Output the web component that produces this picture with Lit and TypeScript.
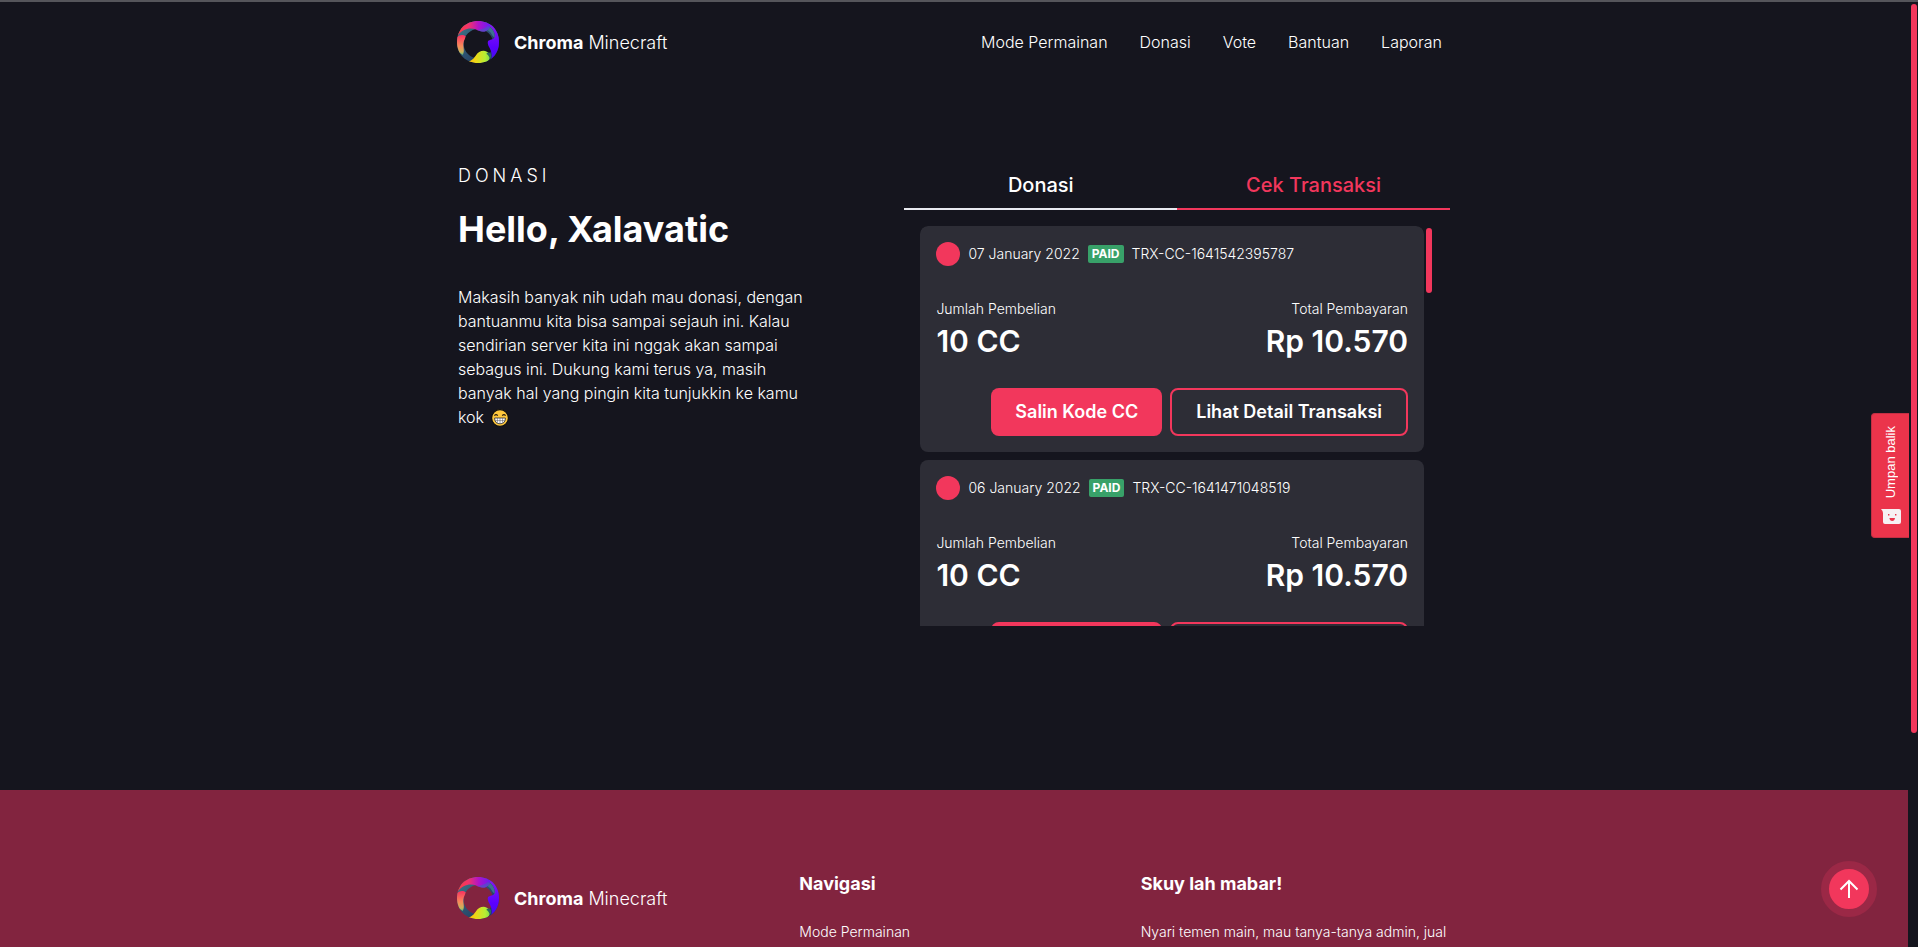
import { LitElement, html, css, svg } from "lit";
import { customElement, property, state } from "lit/decorators.js";

interface Transaction {
  id: string;
  date: string;
  amount: string;
  total: string;
}

const TRANSACTIONS: Transaction[] = [
  { id: "TRX-CC-1641542395787", date: "07 January 2022", amount: "10 CC", total: "Rp 10.570" },
  { id: "TRX-CC-1641471048519", date: "06 January 2022", amount: "10 CC", total: "Rp 10.570" },
];

const NAV = ["Mode Permainan", "Donasi", "Vote", "Bantuan", "Laporan"];

@customElement("chroma-brand")
class ChromaBrand extends LitElement {
  static styles = css`
    :host { display: block; }
    .brand {
      display: flex;
      align-items: center;
      gap: 15px;
      margin-left: -1px;
      color: #fff;
      text-decoration: none;
      font-size: 18px;
      line-height: 27px;
      font-weight: 300;
    }
    .mark { width: 42px; height: 42px; flex: none; }
    b { font-weight: 700; }
  `;
  render() {
    return html`<a class="brand" href="#">
      <svg class="mark" viewBox="0 0 126 126" aria-hidden="true">
        ${svg`
        <defs>
          <clipPath id="edge"><path d="M63 0C100 0 126 26 126 63C126 100 100 126 63 126C26 126 0 100 0 63C0 26 26 0 63 0Z"/></clipPath>
          <linearGradient id="top"><stop offset="0" stop-color="#ff3c3c"/><stop offset=".35" stop-color="#f2336b"/><stop offset=".65" stop-color="#b014c8"/><stop offset="1" stop-color="#6a1cf5"/></linearGradient>
          <linearGradient id="right" x1="0" y1="0" x2="0" y2="1"><stop offset="0" stop-color="#8a1cf0"/><stop offset=".6" stop-color="#5c00ff"/><stop offset="1" stop-color="#3a10f0"/></linearGradient>
          <linearGradient id="left" x1="0" y1="0" x2="0" y2="1"><stop offset="0" stop-color="#f9305f"/><stop offset=".55" stop-color="#f98a5a"/><stop offset=".85" stop-color="#c9b45a"/><stop offset="1" stop-color="#4fae7a"/></linearGradient>
          <linearGradient id="bottom"><stop offset="0" stop-color="#ffae00"/><stop offset=".4" stop-color="#f2d414"/><stop offset=".8" stop-color="#b6ee34"/><stop offset="1" stop-color="#7fdc4c"/></linearGradient>
          <linearGradient id="teal" x1="0" y1="0" x2="1" y2="1"><stop offset="0" stop-color="#3f7d8c"/><stop offset=".5" stop-color="#2b5070"/><stop offset="1" stop-color="#1a2b52"/></linearGradient>
        </defs>
        <g clip-path="url(#edge)">
          <path fill="url(#teal)" fill-rule="evenodd" d="M0 0H126V126H0ZM64 24A44 44 0 1 0 64 112A44 44 0 1 0 64 24Z"/>
          <path fill="url(#right)" d="M96 6H126V126H102C104 110 106 100 101 88C97 78 90 70 93 61C98 54 110 58 113 48C115 34 106 22 96 14Z"/>
          <path fill="#3d7390" d="M94 14C106 22 115 34 113 50C108 48 104 40 100 34C96 30 92 28 90 26Z"/>
          <path fill="url(#left)" d="M0 48C8 40 20 40 26 46C25 54 20 58 19 68C18 80 24 88 17 102L0 90Z"/>
          <path fill="url(#top)" d="M0 0H96C101 8 101 18 94 25C84 36 68 32 56 25C40 19 16 22 2 44Z"/>
          <path fill="#4f54c4" opacity=".7" d="M60 26C76 26 84 20 96 14C98 24 88 34 76 32C70 31 66 29 60 26Z"/>
          <path fill="url(#bottom)" d="M22 126C38 122 48 116 56 104C62 94 70 89 80 89C92 90 98 98 100 108C98 116 92 122 84 126Z"/>
          <path fill="#2c6a5c" d="M88 98C94 93 100 94 102 100C103 106 102 112 98 114C97 106 94 102 88 98Z"/>
        </g>`}
      </svg>
      <span><b>Chroma</b> Minecraft</span>
    </a>`;
  }
}

@customElement("transaction-card")
class TransactionCard extends LitElement {
  @property({ attribute: false }) item!: Transaction;
  static styles = css`
    :host { display: block; }
    .card {
      padding: 16px;
      border-radius: 8px;
      background: #2d2d36;
      display: flex;
      flex-direction: column;
    }
    .head { display: flex; align-items: center; gap: 8px; font-size: 14px; line-height: 24px; font-weight: 300; }
    .dot { width: 24px; height: 24px; border-radius: 50%; background: #f2375c; flex: none; }
    .badge {
      padding: 0 4px;
      border-radius: 2px;
      background: #38a169;
      font-size: 12px;
      line-height: 18px;
      font-weight: 700;
    }
    .stats { display: flex; justify-content: space-between; margin: 32px 0 24px; }
    .stat:last-child { text-align: right; }
    dl, dd, dt { margin: 0; }
    dt { font-size: 14px; line-height: 21px; font-weight: 300; }
    dd { font-size: 30px; line-height: 45px; font-weight: 600; }
    .actions { display: flex; justify-content: flex-end; gap: 8px; }
    button {
      height: 48px;
      padding: 0 24px;
      border: 0;
      border-radius: 8px;
      background: #f2375c;
      color: #fff;
      font: 600 18px/24px Inter, sans-serif;
      cursor: pointer;
    }
    .outline { border: 2px solid #f2375c; background: transparent; }
  `;
  render() {
    const t = this.item;
    return html`<article class="card">
      <div class="head">
        <span class="dot"></span><span>${t.date}</span><span class="badge">PAID</span><span>${t.id}</span>
      </div>
      <dl class="stats">
        <div class="stat"><dt>Jumlah Pembelian</dt><dd>${t.amount}</dd></div>
        <div class="stat"><dt>Total Pembayaran</dt><dd>${t.total}</dd></div>
      </dl>
      <div class="actions">
        <button type="button">Salin Kode CC</button>
        <button type="button" class="outline">Lihat Detail Transaksi</button>
      </div>
    </article>`;
  }
}

@customElement("app-root")
class AppRoot extends LitElement {
  @state() private tab = 1;

  static styles = css`
    :host {
      display: flex;
      height: 100vh;
      box-sizing: border-box;
      border-top: 2px solid #55555b;
      background: #15151e;
      color: #fff;
      font-family: Inter, sans-serif;
      font-size: 16px;
      line-height: 24px;
      overflow: hidden;
    }
    a { color: inherit; text-decoration: none; }
    .page { flex: 1; min-width: 0; overflow-y: auto; scrollbar-width: none; }
    .rail { width: 10px; flex: none; padding: 2px 1px 2px 3px; box-sizing: border-box; }
    .rail-thumb { height: 77.5%; border-radius: 3px; background: #f2375c; }
    .container { max-width: 992px; margin: 0 auto; padding: 0 16px; }
    .header { display: flex; align-items: center; justify-content: space-between; height: 80px; }
    .nav { display: flex; gap: 16px; font-weight: 300; }
    .nav a { padding: 0 8px; }
    .hero { display: grid; grid-template-columns: 45fr 55fr; padding-top: 76px; padding-bottom: 164px; }
    .intro { max-width: 352px; font-weight: 300; }
    .eyebrow { margin: 4px 0 0; font-size: 18px; line-height: 27px; letter-spacing: 4px; }
    h1 { margin: 13px 0 29px; font-size: 36px; line-height: 54px; font-weight: 700; }
    .copy { margin: 0; }
    .emoji { width: 18px; height: 18px; vertical-align: -4px; margin-left: 2px; }
    .tabs { display: flex; }
    .tab {
      flex: 1;
      padding: 13px 16px 9px;
      border: 0;
      border-bottom: 2px solid #e8eaf0;
      background: none;
      color: #fff;
      font: 500 20px/28px Inter, sans-serif;
      cursor: pointer;
    }
    .tab[aria-selected="true"] { color: #f2375c; border-color: #f2375c; }
    .panel { display: flex; margin: 16px 16px 0; height: 400px; }
    .list { flex: 1; overflow-y: auto; scrollbar-width: none; display: flex; flex-direction: column; gap: 8px; border-radius: 8px 8px 0 0; }
    .list-rail { width: 10px; flex: none; padding: 2px; box-sizing: border-box; }
    .list-thumb { height: 65px; border-radius: 3px; background: #f2375c; }
    .footer { background: #82243f; padding: 80px 0 64px; font-weight: 300; font-size: 14px; line-height: 21px; }
    .cols { display: grid; grid-template-columns: repeat(3, 1fr); gap: 32px; }
    .logo-cell { padding-top: 7px; }
    h2 { margin: 0; font-size: 18px; line-height: 27px; font-weight: 700; }
    .links { list-style: none; margin: 24px 0 0; padding: 0; display: grid; gap: 8px; }
    .join { margin: 24px 0 0; }
    .feedback {
      position: absolute;
      right: 9px;
      top: 413px;
      width: 38px;
      height: 125px;
      padding: 12px 0;
      border: 1px solid #c22f43;
      border-right: 0;
      border-radius: 4px 0 0 4px;
      background: #eb344b;
      color: #fff;
      display: flex;
      flex-direction: column;
      align-items: center;
      justify-content: space-between;
      font: 13px/16px "Liberation Sans", sans-serif;
      cursor: pointer;
      box-sizing: border-box;
    }
    .feedback-text { writing-mode: vertical-rl; transform: rotate(180deg); }
    .feedback svg { width: 20px; height: 16px; }
    .to-top {
      position: absolute;
      right: 41px;
      bottom: 30px;
      width: 56px;
      height: 56px;
      padding: 0;
      border: 8px solid #9b2846;
      border-radius: 50%;
      background: #f2375c;
      display: grid;
      place-items: center;
      cursor: pointer;
    }
    .to-top svg { width: 20px; height: 20px; }
  `;

  private backToTop() {
    this.renderRoot.querySelector(".page")?.scrollTo({ top: 0, behavior: "smooth" });
  }

  render() {
    return html`
      <div class="page">
        <header class="header container">
          <chroma-brand></chroma-brand>
          <nav class="nav">${NAV.map((n) => html`<a href="#">${n}</a>`)}</nav>
        </header>
        <main class="hero container">
          <section class="intro">
            <p class="eyebrow">DONASI</p>
            <h1>Hello, Xalavatic</h1>
            <p class="copy">Makasih banyak nih udah mau donasi, dengan bantuanmu kita bisa sampai sejauh ini. Kalau sendirian server kita ini nggak akan sampai sebagus ini. Dukung kami terus ya, masih banyak hal yang pingin kita tunjukkin ke kamu kok
              <svg class="emoji" viewBox="0 0 18 18" role="img" aria-label="😁">
                <circle cx="9" cy="9" r="8.4" fill="#ffc83d" stroke="#0b0b0e" stroke-width="1.2"/>
                <path d="M3.4 6.6Q5 4.6 6.8 6.6M11.2 6.6Q13 4.6 14.6 6.6" fill="none" stroke="#2a1d10" stroke-width="1.1"/>
                <path d="M3.6 9H14.4Q14.4 14.8 9 14.8Q3.6 14.8 3.6 9Z" fill="#fff" stroke="#2a2a2e" stroke-width=".8"/>
                <path d="M4 11.6H14M6.4 9V14M9 9V14.8M11.6 9V14" stroke="#4a4a50" stroke-width=".5"/>
              </svg></p>
          </section>
          <section>
            <div class="tabs" role="tablist">
              ${["Donasi", "Cek Transaksi"].map(
                (label, i) => html`<button
                  class="tab"
                  type="button"
                  role="tab"
                  aria-selected=${this.tab === i ? "true" : "false"}
                  @click=${() => (this.tab = i)}
                >${label}</button>`,
              )}
            </div>
            <div class="panel" role="tabpanel">
              <div class="list">
                ${TRANSACTIONS.map((t) => html`<transaction-card .item=${t}></transaction-card>`)}
              </div>
              <div class="list-rail"><div class="list-thumb"></div></div>
            </div>
          </section>
        </main>
        <footer class="footer">
          <div class="cols container">
            <div class="logo-cell"><chroma-brand></chroma-brand></div>
            <div>
              <h2>Navigasi</h2>
              <ul class="links"><li><a href="#">Mode Permainan</a></li></ul>
            </div>
            <div>
              <h2>Skuy lah mabar!</h2>
              <p class="join">Nyari temen main, mau tanya-tanya admin, jual</p>
            </div>
          </div>
        </footer>
      </div>
      <div class="rail"><div class="rail-thumb"></div></div>
      <button class="feedback" type="button">
        <span class="feedback-text">Umpan balik</span>
        <svg viewBox="0 0 20 16" aria-hidden="true">
          <path d="M0 0H18Q20 0 20 2V13Q20 15 18 15H4Q2 15 2 13V4Q2 2 0 0Z" fill="#f6f1f3"/>
          <path d="M7 5H8.4V6.6H7ZM14 5H15.4V6.6H14ZM8.4 9H14Q13.6 12 11.2 12Q8.8 12 8.4 9Z" fill="#eb344b"/>
        </svg>
      </button>
      <button class="to-top" type="button" aria-label="Kembali ke atas" @click=${this.backToTop}>
        <svg viewBox="0 0 20 20" fill="none" stroke="#fff" stroke-width="2" aria-hidden="true">
          <path d="M10 19V2M1.5 10.5L10 2L18.5 10.5"/>
        </svg>
      </button>
    `;
  }
}
